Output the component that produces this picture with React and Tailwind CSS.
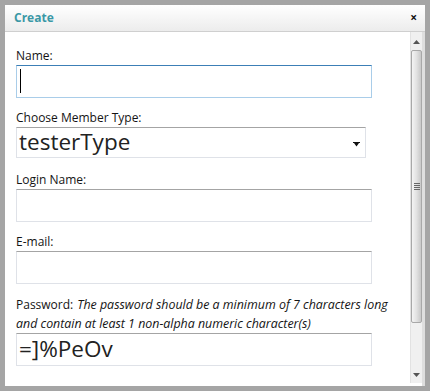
import React from "react";

function Label({ children, className = "" }) {
  return (
    <div className={"text-[12px] leading-[14px] text-[#141414] font-medium " + className}>
      {children}
    </div>
  );
}

function TextBox({ children, focused = false, className = "" }) {
  return (
    <div
      className={
        "relative h-[33px] w-[356px] border bg-white " +
        (focused
          ? "border-[#a9cde9] border-t-[#3c7fb6] "
          : "border-[#dfe2e8] border-t-[#a4a4a4] ") +
        className
      }
    >
      {children}
    </div>
  );
}

export default function App() {
  return (
    <div
      className="w-[430px] h-[391px] bg-[#a5a5a5] pt-[5px] pl-[5px] overflow-hidden"
      style={{ fontFamily: '"Open Sans", "Noto Sans", sans-serif' }}
    >
      <div className="w-[420px] h-[381px] bg-white flex flex-col">
        {/* header */}
        <div className="h-[27px] flex items-center justify-between pl-[9px] pr-[8px] border-b border-[#cfcfcf] bg-gradient-to-b from-white to-[#ececec]">
          <span className="text-[12px] font-bold text-[#3b98a6]">Create</span>
          <span className="text-[12px] font-bold text-[#111] leading-none">×</span>
        </div>
        <div className="flex flex-1 min-h-0">
          {/* content */}
          <div className="flex-1 pl-[11px] pt-[17px]">
            <Label className="mb-[2px]">Name:</Label>
            <TextBox focused>
              <div className="absolute left-[3px] top-[3px] w-[1px] h-[24px] bg-black" />
            </TextBox>

            <Label className="mt-[13px] mb-[2px]">Choose Member Type:</Label>
            <div className="relative h-[31px] w-[350px] border border-[#dfe2e8] border-t-[#a4a4a4] bg-white flex items-center pl-[2px]">
              <span className="text-[22.5px] leading-none text-[#222]">testerType</span>
              <svg className="absolute right-[5px] top-[14px]" width="7" height="5" viewBox="0 0 7 5">
                <path d="M0 0H7V1H6L3.5 4.5L1 1H0Z" fill="#111" />
              </svg>
            </div>

            <Label className="mt-[15px] mb-[2px]">Login Name:</Label>
            <TextBox />

            <Label className="mt-[13px] mb-[2px]">E-mail:</Label>
            <TextBox />

            <div className="mt-[11px] text-[12px] leading-[19px] text-[#141414] whitespace-nowrap">
              <div className="flex">
                <span className="font-medium mr-[4px]">Password:</span>
                <i className="text-[12.4px]">The password should be a minimum of 7 characters long</i>
              </div>
              <i className="block text-[12.4px]">and contain at least 1 non-alpha numeric character(s)</i>
            </div>
            <TextBox className="flex items-center pl-[2px]">
              <span className="text-[22.5px] leading-none text-[#222]">=]%PeOv</span>
            </TextBox>
          </div>
          {/* scrollbar */}
          <div className="w-[12px] mb-[3px] bg-[#f0f0f0] border-l border-[#e2e2e2] flex flex-col items-center">
            <svg className="mt-[8px]" width="7" height="4" viewBox="0 0 7 4">
              <path d="M3.5 0L7 4H0Z" fill="#555" />
            </svg>
            <div className="mt-[6px] w-[11px] h-[273px] rounded-[2px] border border-[#a8a8a8] bg-gradient-to-r from-[#f4f4f4] via-[#e2e2e2] to-[#c8c8c8] flex items-center justify-center">
              <div className="flex flex-col gap-[1px]">
                <div className="w-[6px] h-[1px] bg-[#666]" />
                <div className="w-[6px] h-[1px] bg-[#666]" />
                <div className="w-[6px] h-[1px] bg-[#666]" />
                <div className="w-[6px] h-[1px] bg-[#666]" />
              </div>
            </div>
            <div className="flex-1" />
            <svg className="mb-[6px]" width="7" height="4" viewBox="0 0 7 4">
              <path d="M0 0H7L3.5 4Z" fill="#555" />
            </svg>
          </div>
          <div className="w-[3px] bg-[#dedede]" />
        </div>
      </div>
    </div>
  );
}
